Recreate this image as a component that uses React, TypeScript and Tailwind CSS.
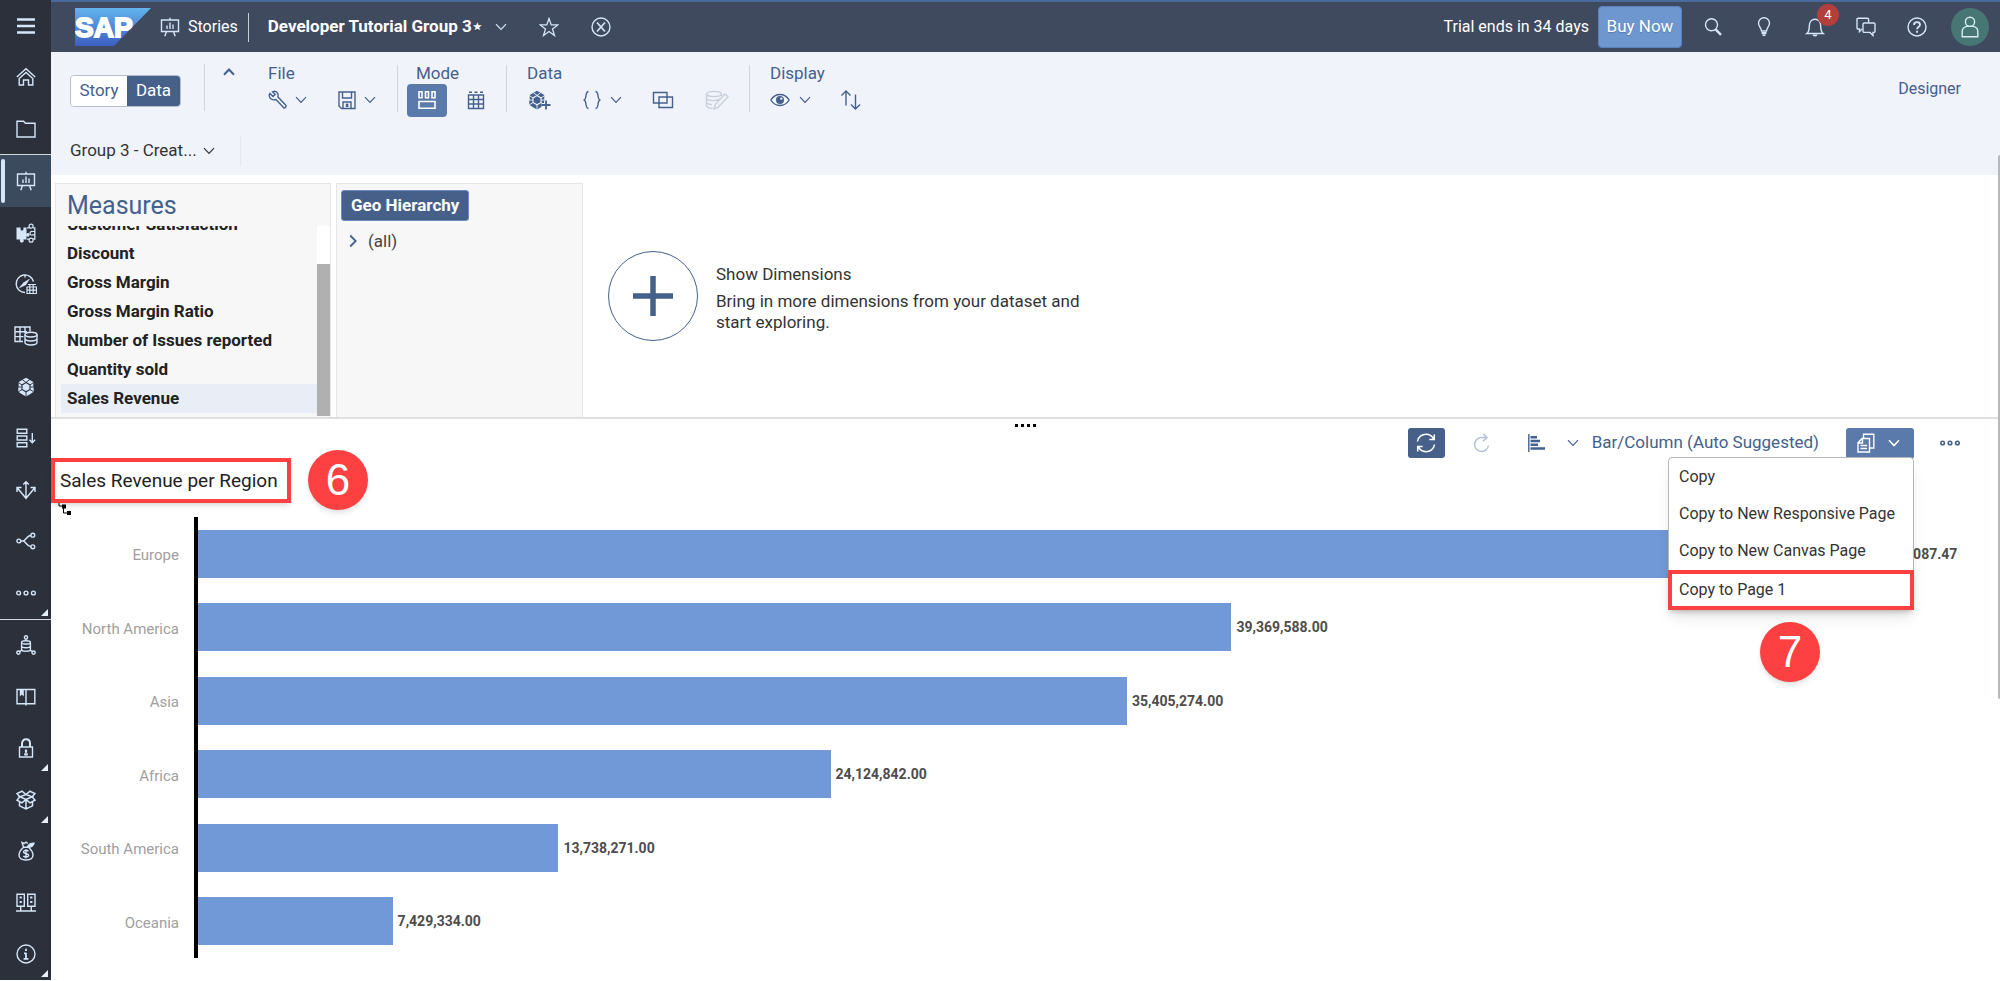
import type { ReactNode } from "react";

type IconProps = { size?: number; w?: number; sw?: number; className?: string; children?: ReactNode };

function Icon({ size = 20, w, sw = 1.4, className, children }: IconProps) {
  return (
    <svg
      width={w ?? size}
      height={size}
      viewBox={`0 0 ${w ?? size} ${size}`}
      fill="none"
      stroke="currentColor"
      strokeWidth={sw}
      className={`shrink-0 ${className ?? ""}`}
      aria-hidden="true"
    >
      {children}
    </svg>
  );
}

const Chevron = ({ sw = 1.2 }: { sw?: number }) => (
  <Icon w={12} size={8} sw={sw}><path d="M1 1.2 6 6.5l5-5.3" /></Icon>
);

const Easel = () => (
  <Icon>
    <path d="M1.5 3h17v11.5h-17zM10 3V0.8M6.5 14.5 4.8 19.3M13.5 14.5l1.7 4.8M7 12V8.5M10 12V5.5M13 12V7.5" />
  </Icon>
);

const Cube = ({ gap = "#2b303a" }: { gap?: string }) => (
  <>
    <path d="M10 .8 13.5 2.8 17.3 5v4.3l.4 1v4.5L14 17.2l-4 2.3-4-2.3-3.7-2.4v-4.5l.4-1V5l3.8-2.2z" fill="currentColor" stroke="none" />
    <path d="M10 5.6l4 2.3v4.6l-4 2.3-4-2.3V7.9z" fill="currentColor" stroke={gap} strokeWidth="1.1" />
    <path d="M6.3 2.7 10 5.4l3.7-2.7M14 7.9 17.6 5.6M14 12.5l3.7 2.4M10 14.8v5M6 12.5l-3.8 2.4M6 7.9 2.3 5.6M1.8 10H6M14 10h4.4" stroke={gap} strokeWidth="0.9" />
  </>
);

const sideIcons: { name: string; more?: boolean; active?: boolean; line?: boolean; art: ReactNode }[] = [
  { name: "Menu", art: <Icon sw={2.6}><path d="M1 3.5h18M1 10h18M1 16.5h18" /></Icon> },
  { name: "Home", art: <Icon><path d="M.8 10 10 1.8 19.2 10M3.2 11.5 10 5.5l6.8 6V18H12.5v-5h-5v5H3.2z" /></Icon> },
  { name: "Files", art: <Icon><path d="M1 18V2.2h6.5l2 2H19V18z" /></Icon> },
  { name: "Stories", active: true, line: true, art: <Easel /> },
  {
    name: "Applications",
    art: (
      <Icon>
        <path d="M.5 4.500h3.700c.8 0 .2 1 .3 1.500a1.500 1.500 0 0 0 3 0c.1-.5-.5-1.500.3-1.500H10.500V16.500H7.300a1.900 1.900 0 1 1-3 0H.5z" fill="currentColor" stroke="none" />
        <circle cx="11.800" cy="11.800" r="1.900" fill="currentColor" stroke="none" />
        <path d="M11 4.800h2.200M17 4.800h1.800v11.400H17M13.200 16.200H11" strokeWidth="1.300" />
        <circle cx="15.100" cy="3.200" r="2" strokeWidth="1.200" />
        <circle cx="15.100" cy="17.200" r="2" strokeWidth="1.200" />
        <path d="M19 8.500h-2.600a1.800 1.800 0 1 0 0 3.400H19" strokeWidth="1.200" />
      </Icon>
    ),
  },
  {
    name: "Digital Boardroom",
    art: (
      <Icon size={22}>
        <path d="M18.5 8.5A8.8 8.8 0 1 0 10 19.5M10 2.5v2" />
        <path d="M3.500 15.500 8.500 9.500l6.500-4-4 6.500z" fill="currentColor" stroke="none" />
        <path d="M13 11.500h8M12 14h9.500v6.500H12zM12 17.200h9.500M14.800 11v9.500M18.200 11v9.500" strokeWidth="1.200" />
      </Icon>
    ),
  },
  {
    name: "Datasets",
    art: (
      <Icon w={24} size={20}>
        <path d="M9 15.5H1V1h15v4.5M1 5.8h12M1 10.6h8.5M6 1v14.5M11 1v6" />
        <ellipse cx="17" cy="8.6" rx="6" ry="2.4" />
        <path d="M11 8.6v8c0 1.3 2.7 2.4 6 2.4s6-1.1 6-2.4v-8M11 12.6c0 1.3 2.7 2.4 6 2.4s6-1.1 6-2.4" />
      </Icon>
    ),
  },
  { name: "Modeler", art: <Icon><Cube /></Icon> },
  { name: "Data Actions", art: <Icon><path d="M1.2 1.2h9.6v4H1.2zM1.2 8h9.6v4H1.2zM1.2 14.8h9.6v4H1.2zM16.3 5v9.5M13.5 11.7l2.8 3 2.8-3" /></Icon> },
  { name: "Allocations", art: <Icon><path d="M10 2v16.5M7.3 4.6 10 1.8l2.7 2.8M1 12V7.5h4.5M1.2 7.8 10 18.3 18.8 7.8M19 12V7.5h-4.5" /></Icon> },
  {
    name: "Multi Actions",
    art: <Icon><circle cx="2.8" cy="10" r="1.9" /><circle cx="16.8" cy="4.2" r="1.9" /><circle cx="16.8" cy="15.8" r="1.9" /><path d="M4.7 10h2.6c2.3-.3 3.5-5.3 7.6-5.8M7.3 10c2.3.3 3.5 5.3 7.6 5.8" /></Icon>,
  },
  { name: "More", more: true, art: <Icon><circle cx="2.6" cy="10" r="1.9" /><circle cx="10" cy="10" r="1.9" /><circle cx="17.4" cy="10" r="1.9" /></Icon> },
  {
    name: "Connections",
    line: true,
    art: (
      <Icon>
        <circle cx="10" cy="2.4" r="1.6" /><circle cx="2.4" cy="17.6" r="1.6" /><circle cx="17.6" cy="17.6" r="1.6" />
        <ellipse cx="10" cy="7.4" rx="4.4" ry="1.6" />
        <path d="M5.6 7.4v7c0 1 2 1.800 4.400 1.800s4.400-.8 4.400-1.800v-7M5.600 11c0 1 2 1.700 4.400 1.700s4.400-.7 4.400-1.700M10 4v2M3.800 16.600l2-1.600M16.200 16.600l-2-1.600" />
      </Icon>
    ),
  },
  { name: "Content Network", art: <Icon><path d="M1 2.5h17.8v14.3H1zM10 2.5v16" /><path d="M3.8 2h4v7.5l-2-2-2 2z" fill="currentColor" stroke="none" /></Icon> },
  { name: "Security", more: true, art: <Icon><path d="M3.5 9h13v10h-13z" /><path d="M6 9V5.5C6 3 7.6 1.3 10 1.3S14 3 14 5.5V9" strokeWidth="2" /><path d="M10 11.5v3.2M8.2 16.3h3.6" strokeWidth="2.2" /></Icon> },
  { name: "Transport", more: true, art: <Icon sw={1.500}><path d="M10 4.500 6 1.200 1 3.500 3.800 6.800 1 10.200l5 2.600 4-3.300 4 3.300 5-2.600-2.800-3.400L19 3.500l-5-2.300zM3.800 6.800 10 9.500l6.200-2.700L10 4.500zM3.500 11.800v4l6.500 3.200 6.500-3.200v-4M10 9.500V19" /></Icon> },
  { name: "Billing", art: <Icon><path d="M7.500 6.200C5 8.500 3 11.500 3 14c0 3.300 2.500 5 7 5s7-1.700 7-5c0-2.500-2-5.500-4.500-7.800zM7.500 6 6 1.500l2.200 1L10 1.200l1.800 1.300" /><path d="M11.500 6c1-3 3-3.800 6.500-3.800-.6 3-3 4.600-6.500 3.800z" fill="currentColor" /><path d="M12.500 10.300c-.5-.7-1.300-1-2.500-1-1.400 0-2.400.6-2.400 1.700 0 2.500 5 .9 5 3.300 0 1.100-1 1.700-2.600 1.700-1.200 0-2.100-.3-2.600-1M10 8.300v9" /></Icon> },
  { name: "Deployment", art: <Icon><path d="M1 1.200h7.300v12H1zM11.700 1.200H19v12h-7.300zM4.700 13.200V18M15.300 13.200V18M0 18h20" /><path d="M4.700 3.500v2M4.700 8v2M15.300 3.500v2M15.300 8v2" strokeWidth="2.200" /></Icon> },
  { name: "About", more: true, art: <Icon><circle cx="10" cy="10" r="9" /><path d="M10 4.800v2.200M10 8.700v6M8 9.300h2M7.600 14.800h4.800" strokeWidth="1.800" /></Icon> },
];

const measures = ["Discount", "Gross Margin", "Gross Margin Ratio", "Number of Issues reported", "Quantity sold", "Sales Revenue"];

const regions = [
  { name: "Europe", share: 94.9, label: "087.47" },
  { name: "North America", share: 57.35, label: "39,369,588.00" },
  { name: "Asia", share: 51.55, label: "35,405,274.00" },
  { name: "Africa", share: 35.1, label: "24,124,842.00" },
  { name: "South America", share: 20, label: "13,738,271.00" },
  { name: "Oceania", share: 10.8, label: "7,429,334.00" },
];

function SapLogo() {
  return (
    <svg width="76" height="38" viewBox="0 0 76 38" className="shrink-0" role="img" aria-label="SAP">
      <defs>
        <linearGradient id="sap" x1="0" y1="0" x2="0" y2="1">
          <stop offset="0" stopColor="#62b4ee" />
          <stop offset="1" stopColor="#3c5fc2" />
        </linearGradient>
      </defs>
      <path d="M0 0h76L39 38H0z" fill="url(#sap)" />
      <text x="0" y="29" fill="#fff" stroke="#fff" strokeWidth="1.8" fontFamily="Liberation Sans" fontWeight="700" fontSize="28">SAP</text>
    </svg>
  );
}

function Sidebar() {
  return (
    <nav className="flex w-[51px] shrink-0 flex-col bg-[#2b303a] text-[#d5e6fa]" aria-label="Main">
      {sideIcons.map((it) => (
        <button
          key={it.name}
          aria-label={it.name}
          className={`relative flex w-full flex-1 items-center justify-center ${it.line ? "border-t border-[#d4d7dc]" : ""} ${it.active ? "bg-[#3b4a5d]" : ""}`}
        >
          {it.active && <span className="absolute top-1 bottom-1 left-px w-1 rounded-full bg-[#d5e6fa]" />}
          {it.art}
          {it.more && (
            <svg width="7" height="7" className="absolute right-[3px] bottom-[3px]" aria-hidden="true"><path d="M7 0v7H0z" fill="#e6effa" /></svg>
          )}
        </button>
      ))}
    </nav>
  );
}

function Header() {
  return (
    <header className="flex h-[52px] items-center border-t-2 border-[#4a6a9b] bg-[#3f4a5f] pr-[11px] pl-6 text-[17px] text-white">
      <SapLogo />
      <a href="#stories" className="ml-[9px] flex items-center gap-2 text-base"><span className="text-[#d5e6fa]"><Easel /></span>Stories</a>
      <span className="ml-2.5 h-[29px] w-px bg-[#c9ced6]" />
      <button className="ml-[19px] flex items-center gap-3 font-bold">Developer Tutorial Group 3⋆<span className="text-[#d5e6fa]"><Chevron /></span></button>
      <div className="ml-8 flex gap-8 text-[#d5e6fa]">
        <button aria-label="Favorite"><Icon sw={1.3}><path d="m10 1.500 2.200 6.400h6.600l-5.300 4 2 6.600-5.500-4-5.500 4 2-6.600-5.300-4h6.600z" /></Icon></button>
        <button aria-label="Close"><Icon><circle cx="10" cy="10" r="9" /><path d="m6 5.500 8 9M14 5.500l-8 9" strokeWidth="1.700" /></Icon></button>
      </div>
      <div className="ml-auto flex items-center text-[#d5e6fa]">
        <span className="text-base text-white">Trial ends in 34 days</span>
        <button className="ml-[9px] h-[42px] w-[84px] rounded-sm border border-[#5a80bd] bg-[#6e96cf] text-white text-shadow-xs">Buy Now</button>
        <div className="ml-[21px] flex items-center gap-[31px]">
          <button aria-label="Search"><Icon><circle cx="8.500" cy="7.800" r="6" /><path d="m12.600 12.300 5.400 5.500" strokeWidth="2.400" /></Icon></button>
          <button aria-label="Tips"><Icon><path d="M7.500 14c0-2.500-3-4.500-3-8A5.400 5.400 0 0 1 10 .8 5.400 5.400 0 0 1 15.500 6c0 3.500-3 5.500-3 8z" /><path d="M7.500 16h5M8.500 18.200h3" strokeWidth="1.800" /></Icon></button>
          <button aria-label="Notifications" className="relative">
            <Icon><path d="M1.800 16.500c2-1.500 2.500-3 2.500-7.500C4.300 5 6.500 2.200 10 2.200S15.700 5 15.700 9c0 4.500.5 6 2.500 7.500z" /><path d="M7.500 17.500h5a2.500 2 0 0 1-5 0z" fill="currentColor" stroke="none" /></Icon>
            <span className="absolute -top-[13px] left-3 flex size-[22px] items-center justify-center rounded-full bg-[#b23f3c] text-[13px] text-white">4</span>
          </button>
          <button aria-label="Chat"><Icon><path d="M6 12 3.500 14.500V12H2.200Q1 12 1 10.800V2.400Q1 1.200 2.200 1.200h9.200q1.200 0 1.200 1.200v3" /><path d="M8.200 6h9.600Q19 6 19 7.200v7q0 1.200-1.200 1.200H17v3L14 15.400H8.200Q7 15.400 7 14.200v-7Q7 6 8.200 6z" /></Icon></button>
          <button aria-label="Help"><Icon><circle cx="10" cy="10" r="9" /><path d="M7 8c0-1.800 1.200-2.800 3-2.800s3 .9 3 2.500C13 10 10 10 10 12.300M10 13.700v2" strokeWidth="1.800" /></Icon></button>
        </div>
        <button aria-label="Profile" className="ml-6 flex size-[38px] items-center justify-center rounded-full bg-[#467774] text-[#d9ecf0]">
          <Icon size={22}><circle cx="11" cy="5.800" r="4.600" /><path d="M3.200 20.800v-5.300C3.200 12.800 5.200 11 8 10.400h6c2.800.6 4.800 2.400 4.800 5.100v5.300z" /></Icon>
        </button>
      </div>
    </header>
  );
}

const Divider = () => <span className="mt-[13px] h-[47px] w-px bg-[#cfd5de]" />;

function Group({ title, pad, indent = "", children }: { title: string; pad: string; indent?: string; children: ReactNode }) {
  return (
    <section className={`flex flex-col pt-[10px] ${pad}`}>
      <h2 className={`text-[17px] leading-[22px] ${indent}`}>{title}</h2>
      <div className="flex h-[32px] items-center">{children}</div>
    </section>
  );
}

function Toolbar() {
  return (
    <div className="h-[123px] bg-[#f0f3f9] pl-[19px] text-[#44618e]">
      <div className="flex h-[75px] items-start">
        <div className="mt-[23px] flex h-8 overflow-hidden rounded-[4px] border border-[#b5bfce] text-[17px]">
          <button className="w-14 bg-white">Story</button>
          <button className="w-[53px] bg-[#466089] text-white">Data</button>
        </div>
        <span className="mt-3 ml-[23px] h-[47px] w-px bg-[#cfd5de]" />
        <button aria-label="Collapse toolbar" className="mt-4 ml-[18px] rotate-180"><Chevron sw={2} /></button>
        <Group title="File" pad="pl-[33px] pr-[21px]">
          <button aria-label="Edit options" className="flex items-center gap-[7px]">
            <Icon><path d="M2 3.500 5 6.500 7.200 4.500 4.500 1.800C7 .8 9 1.800 9.800 3.600c.5 1.300.3 2.400 0 3.200l8 8.500c1 1-.8 3.500-2.300 2.300L8 9.500C5 10.500 1 9 1.200 5z" /></Icon><Chevron />
          </button>
          <button aria-label="Save" className="ml-[30px] flex items-center gap-[7px]">
            <Icon><path d="M2 2h16v16.500H4.500L2 16zM5.500 2v6h9V2M6 18.500V12h8v6.500" /><path d="M9.500 14.300h1.200v2H9.500z" /></Icon><Chevron />
          </button>
        </Group>
        <Divider />
        <Group title="Mode" pad="pl-[9px] pr-[20px]" indent="ml-[9px]">
          <button aria-label="Card view" className="flex h-[33px] w-10 items-center justify-center rounded-[4px] bg-[#5a7aac] text-white">
            <Icon sw={1.600}><path d="M2 1.800h3v6H2zM8.500 1.800h3v6h-3zM15 1.800h3v6h-3zM2 11.500h16v6.700H2z" /></Icon>
          </button>
          <button aria-label="Grid view" className="ml-[19px]">
            <Icon><path d="M2.500 5h15v13.500h-15zM2.500 9.500h15M2.500 14h15M7.500 5v13.500M12.500 5v13.500M3 2.200h3M8.500 2.200h3M14 2.200h3" /></Icon>
          </button>
        </Group>
        <Divider />
        <Group title="Data" pad="pl-5 pr-[20px]">
          <button aria-label="Add data"><Icon w={24} size={20}><Cube gap="#f0f3f9" /><path d="M19 10.500v9M14.500 15h9" stroke="#f0f3f9" strokeWidth="4" /><path d="M19 10.500v9M14.500 15h9" strokeWidth="1.800" /></Icon></button>
          <button aria-label="Formulas" className="ml-[31px] flex items-center gap-2">
            <Icon><path d="M6.500 1.500C2.500 1.500 5.500 10 1.500 10c4 0 1 8.500 5 8.500M13.500 1.500c4 0 1 8.500 5 8.500-4 0-1 8.500-5 8.500" /></Icon><Chevron />
          </button>
          <button aria-label="Linked analysis" className="ml-[30px]"><Icon w={22} size={20}><path d="M1.500 2.500H15v10.500H1.500zM7 7h13.500v10.500H7z" /></Icon></button>
          <button aria-label="Edit data" disabled className="ml-[31px] text-[#c9d0dc]">
            <Icon w={24} size={20}><ellipse cx="9" cy="4" rx="7.500" ry="2.600" /><path d="M1.500 4v11.500c0 1.500 2.500 2.700 6 2.800M1.500 8c0 1.500 3 2.600 6.500 2.600s6-.6 7.500-2M1.500 12c0 1.400 2.500 2.500 5.500 2.600M16.500 4v2M9 19l1.200-4.500L20 4l3 2.800-10 10.500z" /></Icon>
          </button>
        </Group>
        <Divider />
        <Group title="Display" pad="pl-5">
          <button aria-label="Show or hide" className="flex items-center gap-[9px]">
            <Icon><path d="M.8 10C3 6.500 6 4.500 10 4.500s7 2 9.200 5.500c-2.200 3.500-5.200 5.500-9.200 5.500S3 13.500.8 10z" /><circle cx="10" cy="10" r="4" fill="currentColor" stroke="none" /><circle cx="11.300" cy="8.600" r="1.200" fill="#f0f3f9" stroke="none" /></Icon><Chevron />
          </button>
          <button aria-label="Sort" className="ml-[29px]"><Icon w={22} size={20}><path d="M6 15.500V1.200M1.500 5.500 6 1l4.500 4.500M15.500 4.500v14.300M11 14.500l4.500 4.500 4.500-4.500" /></Icon></button>
        </Group>
        <button className="mt-[26px] mr-[39px] ml-auto text-base leading-[22px]">Designer</button>
      </div>
      <div className="flex h-[47px] items-center">
        <button className="flex h-[31px] w-[171px] items-center gap-[6px] border-r border-[#e4e8ef] text-[17px] text-[#333]">Group 3 - Creat...<Chevron /></button>
      </div>
    </div>
  );
}

function Explorer() {
  return (
    <section className="flex h-[244px] gap-[5px] border-b-2 border-[#dfdfdf] pt-2 pl-1">
      <div className="flex w-[276px] flex-col border border-b-0 border-[#e6e6e6] bg-[#f7f7f7]">
        <h2 className="pt-[6px] pl-[11px] text-[25px] leading-[32px] text-[#44618e]">Measures</h2>
        <div className="mt-1 flex h-[190px] overflow-hidden">
          <ul className="flex flex-1 flex-col justify-end pb-[3px] pl-[5px] text-[17px] leading-[29px] font-bold text-[#222]">
            <li className="h-[29px] shrink-0 pl-[6px]">Customer Satisfaction</li>
            {measures.map((m) => (
              <li key={m} className={`h-[29px] shrink-0 pl-[6px] ${m === "Sales Revenue" ? "bg-[#e8edf6]" : ""}`}>{m}</li>
            ))}
          </ul>
          <div className="flex w-[13px] items-end bg-white"><span className="h-[152px] w-full bg-[#b0b0b0]" /></div>
        </div>
      </div>
      <div className="w-[247px] border border-b-0 border-[#e6e6e6] bg-[#f7f7f7] pt-[6px] pl-1">
        <button className="h-[31px] rounded-[3px] border border-[#6d8cc0] bg-[#466089] px-[9px] text-[17px] font-bold text-white">Geo Hierarchy</button>
        <button className="mt-2 ml-2 flex items-center gap-[11px] text-[17px] leading-6 text-[#444]">
          <Icon w={8} size={14} sw={1.800} className="text-[#44618e]"><path d="m1.200 1.500 5.500 5.500-5.500 5.500" /></Icon>(all)
        </button>
      </div>
      <div className="flex items-center gap-[18px] pb-[9px] pl-5">
        <button aria-label="Show dimensions" className="flex size-[90px] items-center justify-center rounded-full border border-[#44618e] text-[#466089]">
          <Icon size={40} sw={5.500}><path d="M20 0v40M0 20h40" /></Icon>
        </button>
        <div className="w-[370px] pt-[5px] text-[17px] leading-[21px] text-[#333]">
          <p className="mb-[6px]">Show Dimensions</p>
          <p>Bring in more dimensions from your dataset and start exploring.</p>
        </div>
      </div>
    </section>
  );
}

function CopyMenu() {
  return (
    <div className="relative">
      <button aria-label="Copy options" className="flex h-[31px] w-[68px] items-center gap-3 rounded-[3px] bg-[#5a7aac] pl-[10px] text-white">
        <Icon><path d="M6.500 5V1h11v12.500h-3M4 8V3.500" stroke="none" /><path d="M7.500 5V1.200h10.300V15h-4" /><path d="M6 3.500h9.500" stroke="none" /><path d="M2 9.800 6 5.500h7.500V19H2zM6.500 5.500V10H2" /><path d="M4.500 12.500h6.500M4.500 15.500h6.500" /></Icon>
        <Chevron sw={1.600} />
      </button>
      <ul className="absolute top-[29px] right-0 z-10 w-[246px] rounded-[4px] border border-[#b8b8b8] bg-white pt-px text-base text-[#333] shadow-lg">
        {["Copy", "Copy to New Responsive Page", "Copy to New Canvas Page"].map((t) => (
          <li key={t}><button className="h-[37px] w-full pl-[10px] text-left whitespace-nowrap">{t}</button></li>
        ))}
        <li className="-mx-px -mb-px border-4 border-[#fd4142] shadow-md"><button className="h-8 w-full pl-[7px] text-left">Copy to Page 1</button></li>
      </ul>
      <span className="absolute top-[194px] left-[-86px] flex size-[60px] items-center justify-center rounded-full bg-[#fd4142] font-['Liberation_Sans'] text-[44px] text-white shadow-md">7</span>
    </div>
  );
}

function ChartPanel() {
  return (
    <section className="flex flex-1 flex-col">
      <div className="flex h-2 items-end justify-center gap-[3px]">
        {[0, 1, 2, 3].map((i) => <span key={i} className="h-[3px] w-[3px] bg-black" />)}
      </div>
      <div className="flex h-8 items-center justify-end pr-10 text-[17px] text-[#44618e]">
        <button aria-label="Refresh" className="flex h-[30px] w-[37px] items-center justify-center rounded-[3px] bg-[#466089] text-white">
          <Icon sw={1.500}><path d="M1.500 8.500C2 4 6 1.300 10 1.300c3.300 0 6 1.600 7.500 4.500M18.300 1.500v5h-5M18.500 11.500c-.5 4.500-4.500 7.200-8.500 7.200-3.300 0-6-1.600-7.500-4.500M1.700 18.500v-5h5" /></Icon>
        </button>
        <button aria-label="Redo" className="ml-[26px] text-[#b4c1d4]"><Icon sw={1.500}><path d="M15.500 4.500H10a7 7 0 1 0 7.500 8M12 .8l4 3.700-4 3.800" /></Icon></button>
        <button aria-label="Chart type" className="ml-[36px] flex items-center gap-5">
          <Icon><path d="M1.800 1v18" /><path d="M3.500 4.300h6.500M3.500 8h9.500M3.500 11.700h7.500M3.500 15.500h14.500" strokeWidth="2.600" /></Icon><Chevron />
        </button>
        <button className="ml-[13px]">Bar/Column (Auto Suggested)</button>
        <span className="w-[27px]" />
        <CopyMenu />
        <button aria-label="More" className="ml-[26px]"><Icon sw={1.600}><circle cx="2.600" cy="10" r="1.800" /><circle cx="10" cy="10" r="1.800" /><circle cx="17.400" cy="10" r="1.800" /></Icon></button>
      </div>
      <div className="-mt-[9px] flex items-center gap-[17px]">
        <h1 className="border-4 border-[#fd4142] px-[5px] text-[19px] leading-[37px] text-[#222] shadow-md">
          <span className="block w-[222px] whitespace-nowrap">Sales Revenue per Region</span>
        </h1>
        <span className="flex size-[60px] items-center justify-center rounded-full bg-[#fd4142] font-['Liberation_Sans'] text-[44px] text-white shadow-md">6</span>
      </div>
      <Icon w={14} size={12} className="-mt-[7px] ml-[7px] text-black"><path d="M1 0v3h4M5.500 5v5h4" strokeWidth="1" /><path d="M4 1.500h4v4H4zM9 8h4v4H9z" fill="currentColor" stroke="none" /></Icon>
      <div className="mt-[2px] flex">
        <div className="flex w-[128px] flex-col text-right text-[15px] text-[#a0a0a0]">
          {regions.map((r) => <span key={r.name} className="flex flex-1 items-center justify-end pt-[3px]">{r.name}</span>)}
        </div>
        <ul className="ml-[15px] h-[441px] flex-1 border-l-4 border-black">
          {regions.map((r) => (
            <li key={r.name} className="flex h-1/6 items-center gap-[5px] text-sm font-bold text-[#4d4d4d]">
              <span className="h-12 bg-[#7199d7]" style={{ width: `${r.share}%` }} />
              {r.label}
            </li>
          ))}
        </ul>
      </div>
    </section>
  );
}

export default function App() {
  return (
    <div className="relative flex min-h-screen bg-white pb-px font-[Roboto,'Noto_Sans',sans-serif]">
      <Sidebar />
      <main className="flex min-w-0 flex-1 flex-col">
        <Header />
        <Toolbar />
        <Explorer />
        <ChartPanel />
      </main>
      <span className="absolute top-[155px] right-0 h-[544px] w-0.5 rounded-l-full bg-[#b5b8bd]" />
    </div>
  );
}
